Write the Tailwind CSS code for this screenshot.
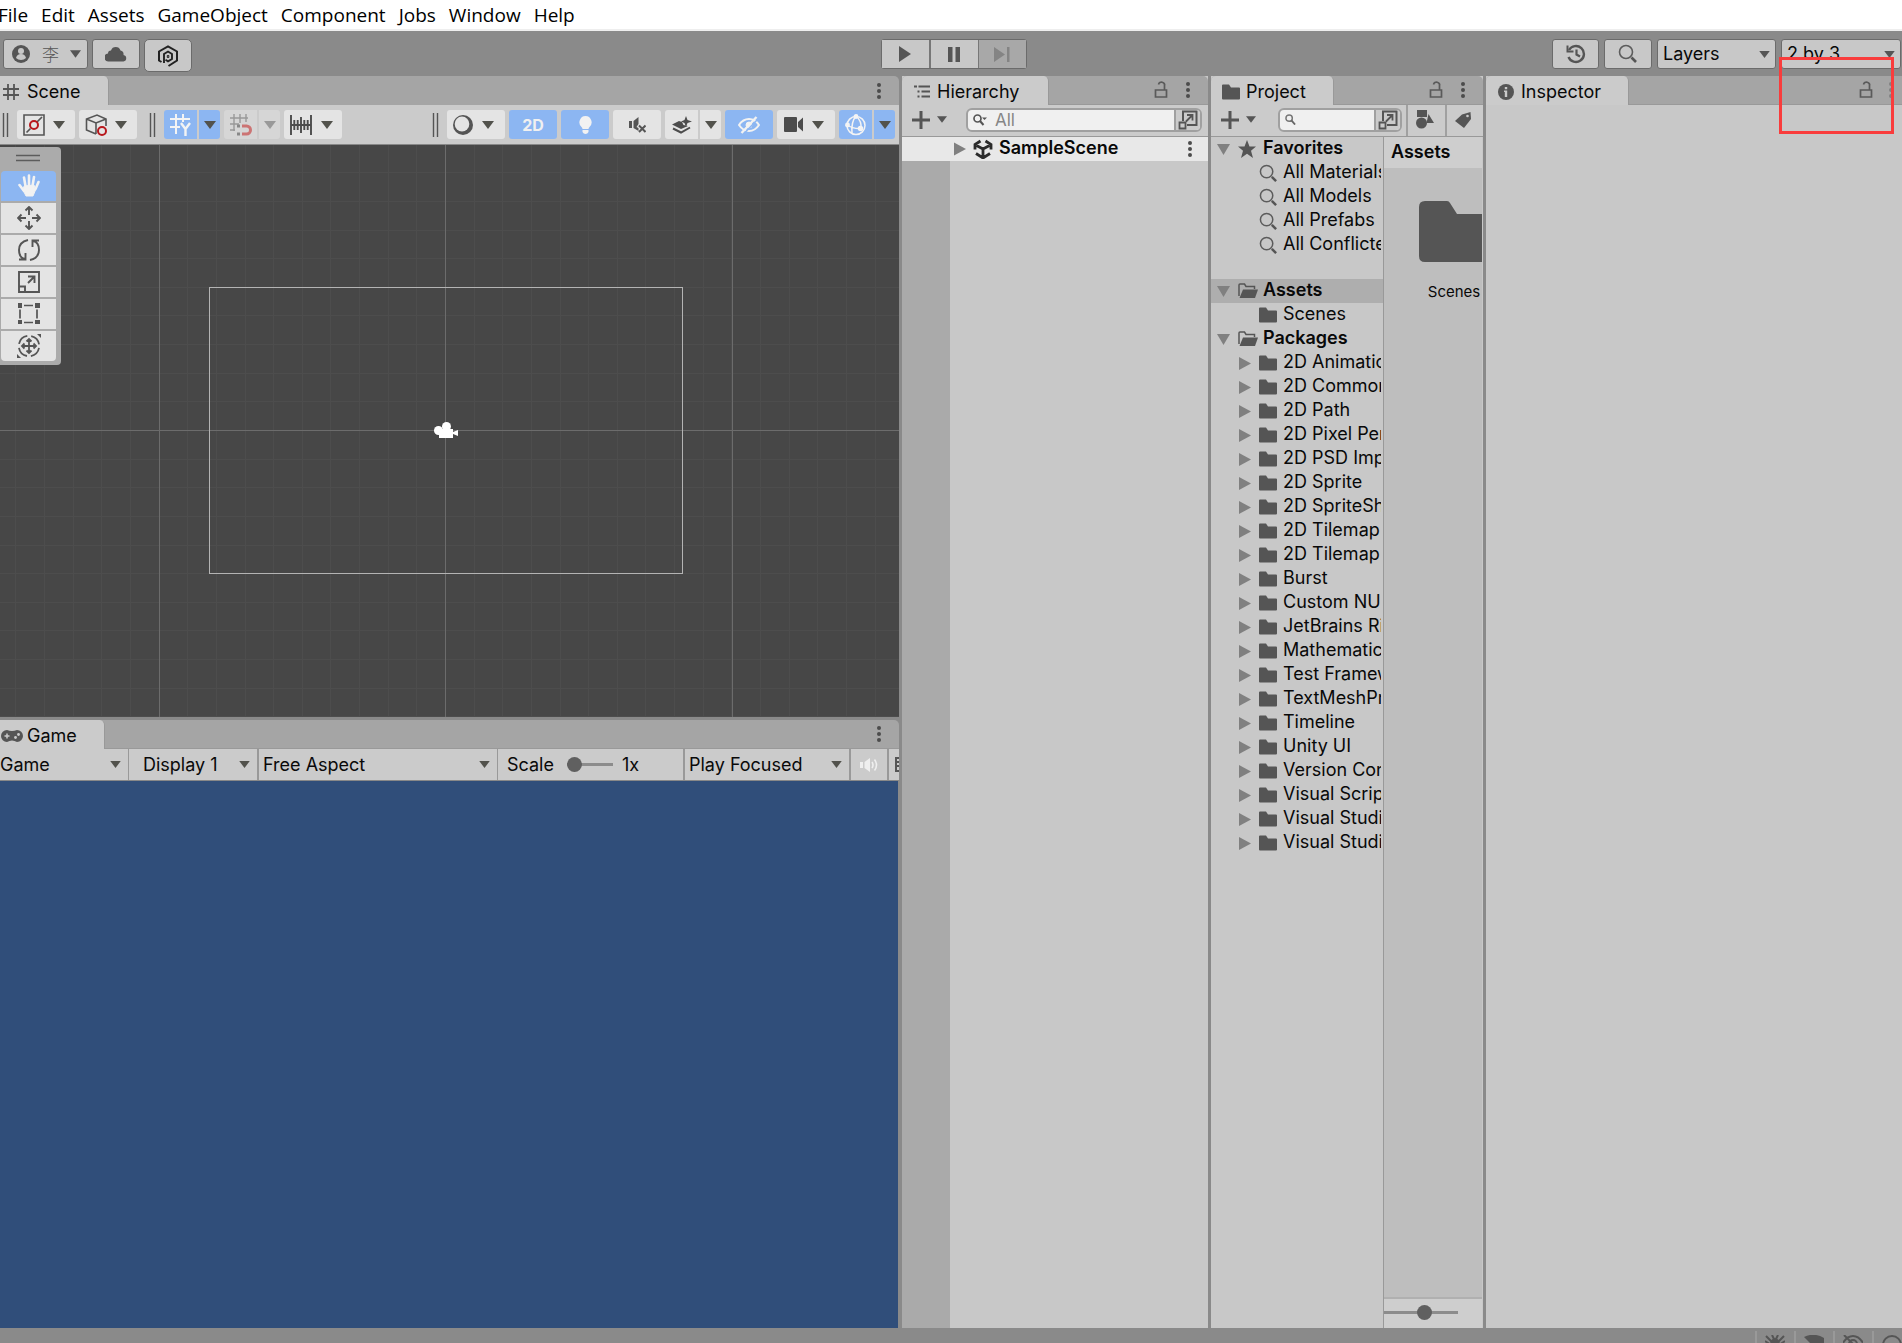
<!DOCTYPE html>
<html lang="en">
<head>
<meta charset="utf-8">
<title>Unity Editor</title>
<script src="https://cdn.jsdelivr.net/npm/@tailwindcss/browser@4"></script>
</head>
<body class="flex h-screen flex-col overflow-hidden bg-[#8a8a8a] font-['Inter','Noto_Sans_CJK_SC',sans-serif] text-[18px] leading-6 text-[#090909]">

<svg class="hidden" aria-hidden="true">
  <symbol id="arrow" viewBox="0 0 12 8"><path d="M0 0h12L6 8z" fill="currentColor"/></symbol>
  <symbol id="dots" viewBox="0 0 4 16"><g fill="#4c4c4c"><circle cx="2" cy="2" r="2"/><circle cx="2" cy="8" r="2"/><circle cx="2" cy="14" r="2"/></g></symbol>
  <symbol id="lock" viewBox="0 0 14 18"><path d="M1.500 9h11v7h-11zM10.500 9V5a3 3 0 0 0-6-1.500" fill="none" stroke="#5a5a5a" stroke-width="1.700"/></symbol>
  <symbol id="plus" viewBox="0 0 18 18"><path d="M9 0v18M0 9h18" stroke="#555" stroke-width="3" fill="none"/></symbol>
  <symbol id="search" viewBox="0 0 20 20"><circle cx="8" cy="8" r="6.500" fill="none" stroke="#5c5c5c" stroke-width="1.600"/><path d="M13.500 13.500l4.500 4.500" stroke="#555" stroke-width="2.600"/></symbol>
  <symbol id="pick" viewBox="0 0 20 20"><path d="M5 11V1.500h13.500V15H9" fill="none" stroke="#555" stroke-width="2"/><path d="M1.500 12.500h6v6h-6zM8 11.500l6-6M9 5h5.500v5.500" fill="none" stroke="#555" stroke-width="1.800"/></symbol>
  <symbol id="folder" viewBox="0 0 18 16"><path d="M0 1.500Q0 .5 1 .5h6L9 3.500h8q1 0 1 1V14.500q0 1-1 1H1q-1 0-1-1z" fill="#555"/></symbol>
  <symbol id="folder-open" viewBox="0 0 20 16"><path d="M1 13V2q0-1 1-1h4.500L8 3.500h8.500V6" fill="none" stroke="#555" stroke-width="1.500"/><path d="M5 6.500h15L17 15H1.500z" fill="#555"/></symbol>
  <symbol id="grip" viewBox="0 0 7 24"><path d="M1.500 0v24M5.500 0v24" stroke="#555" stroke-width="1.400"/></symbol>
</svg>

<!-- menu bar -->
<nav class="flex h-[31px] shrink-0 gap-[13px] border-b-2 border-[#eeeeee] bg-white font-['Open_Sans',sans-serif] text-[19px] leading-[30px] text-black">
  <a href="#" class="-ml-0.5">File</a><a href="#">Edit</a><a href="#">Assets</a><a href="#">GameObject</a><a href="#">Component</a><a href="#">Jobs</a><a href="#">Window</a><a href="#">Help</a>
</nav>

<!-- main toolbar -->
<header class="grid h-[45px] shrink-0 grid-cols-[1fr_auto_1fr] items-start pt-2">
  <div class="flex items-start gap-1 pl-[3px]">
    <button class="flex h-[30px] w-[85px] items-center rounded-[3px] border border-[#6b6b6b] bg-[#c8c8c8] pl-2 text-[#555]" aria-label="Account">
      <svg class="size-[18px]" viewBox="0 0 18 18"><circle cx="9" cy="9" r="9" fill="#555"/><circle cx="9" cy="6" r="3" fill="#c8c8c8"/><path d="M4 13q1-4 5-4t5 4q-2 2-5 2t-5-2z" fill="#c8c8c8"/></svg>
      <span class="ml-3 font-['Noto_Sans_CJK_SC',sans-serif] text-[17px] font-light">李</span>
      <svg class="ml-[11px] h-2 w-[11px]"><use href="#arrow"/></svg>
    </button>
    <button class="flex h-[30px] w-12 items-center justify-center rounded-[3px] border border-[#6b6b6b] bg-[#c8c8c8]" aria-label="Cloud">
      <svg class="h-4 w-[22px]" viewBox="0 0 22 16"><path d="M4 15.500a4 4 0 0 1-1-8 3 3 0 0 1 3-3 5 5 0 0 1 9.500 0 4 4 0 0 1 3 4.500 3.300 3.300 0 0 1 0 6.500z" fill="#555"/></svg>
    </button>
    <button class="flex h-[33px] w-12 items-center justify-center rounded-[5px] border border-[#6b6b6b] bg-[#c8c8c8]" aria-label="Package">
      <svg class="h-[22px] w-5" viewBox="0 0 20 22" fill="none" stroke="#222" stroke-width="2"><path d="M3.500 17L1 15.500v-9L10 1.300l9 5.200v9l-8.500 5.500"/><path d="M6 18V9l4-2.500L14 9v5l-4 2.300-2.500-1.500" stroke-width="1.900"/><path d="M9.300 10.500h1.500v2H9.300z" stroke-width="1"/></svg>
    </button>
  </div>
  <div class="ml-[5px] flex h-[30px] w-[146px] rounded-[3px] border border-[#6b6b6b]">
    <button class="grid flex-1 place-items-center border-r-2 border-[#777] bg-[#c8c8c8]" aria-label="Play"><svg class="h-4 w-3" viewBox="0 0 12 16"><path d="M0 0l12 8-12 8z" fill="#555"/></svg></button>
    <button class="grid flex-1 place-items-center border-r border-[#777] bg-[#c8c8c8]" aria-label="Pause"><svg class="h-[15px] w-3" viewBox="0 0 12 15"><path d="M0 0h4.500v15H0zM7.500 0H12v15H7.500z" fill="#555"/></svg></button>
    <button class="grid flex-1 place-items-center bg-[#a8a8a8]" aria-label="Step"><svg class="h-[15px] w-4" viewBox="0 0 16 15"><path d="M0 0l11 7.500L0 15zM13 0h2.500v15H13z" fill="#848484"/></svg></button>
  </div>
  <div class="flex justify-end gap-[5px] pr-px">
    <button class="grid h-[30px] w-[47px] place-items-center rounded-[3px] border border-[#6b6b6b] bg-[#c8c8c8]" aria-label="History">
      <svg class="size-5" viewBox="0 0 20 20" fill="none" stroke="#555"><path d="M3 6a8 8 0 1 1-.5 7" stroke-width="2.400"/><path d="M1.500 1.500V7.500h6" stroke-width="2"/><path d="M10.500 5.500v5l3.500 2" stroke-width="2.200"/></svg>
    </button>
    <button class="grid h-[30px] w-12 place-items-center rounded-[3px] border border-[#6b6b6b] bg-[#c8c8c8]" aria-label="Search"><svg class="size-5"><use href="#search"/></svg></button>
    <div class="grid h-[30px] w-[119px] items-center [&>*]:[grid-area:1/1]">
      <select aria-label="Layers" class="h-full w-full appearance-none rounded-[3px] border border-[#6b6b6b] bg-[#c8c8c8] pl-[5px]"><option>Layers</option></select>
      <svg class="pointer-events-none mr-[6px] h-[7px] w-[11px] justify-self-end text-[#555]"><use href="#arrow"/></svg>
    </div>
    <div class="grid h-[30px] w-[120px] items-center [&>*]:[grid-area:1/1]">
      <select aria-label="Layout" class="h-full w-full appearance-none rounded-[3px] border border-[#6b6b6b] bg-[#c8c8c8] pl-[5px]"><option>2 by 3</option></select>
      <svg class="pointer-events-none mr-[6px] h-[7px] w-[11px] justify-self-end text-[#555]"><use href="#arrow"/></svg>
    </div>
  </div>
</header>

<main class="grid min-h-0 flex-1 grid-cols-[minmax(0,899fr)_minmax(0,306fr)_minmax(0,272fr)_minmax(0,416fr)] gap-[3px]">

  <div class="grid min-h-0 grid-rows-[minmax(0,641fr)_minmax(0,608fr)] gap-[3px]">
    <!-- scene -->
    <section class="flex flex-col">
      <div class="flex h-[29px] shrink-0 items-center justify-between rounded-tr-[5px] bg-[#a5a5a5] pr-[18px]">
        <h2 class="flex h-full w-[109px] items-center gap-2 rounded-tr-[5px] border-r border-[#999] bg-[#cbcbcb] pt-0.5 pl-[3px]">
          <svg class="size-4" viewBox="0 0 16 16"><path d="M5 0v16M11 0v16M0 5h16M0 11h16" stroke="#555" stroke-width="1.800"/></svg>Scene</h2>
        <button aria-label="Scene options"><svg class="h-4 w-1"><use href="#dots"/></svg></button>
      </div>
      <div class="flex h-10 shrink-0 items-center justify-between border-b border-[#888] bg-[#cbcbcb] pr-1 pl-0.5 text-[#52524c]">
        <div class="flex items-center gap-1">
          <svg class="mr-1 h-6 w-[7px]"><use href="#grip"/></svg>
          <button class="flex h-[29px] w-[58px] items-center gap-2 rounded-[3px] bg-[#e4e4e4] pl-[6px]" aria-label="Tool pivot">
            <svg class="size-[22px]" viewBox="0 0 22 22" fill="none"><path d="M1 1h20v20H1z" stroke="#555" stroke-width="1.600"/><path d="M3.500 18.500l4-4M14 8l5-5" stroke="#555" stroke-width="1.700"/><circle cx="11" cy="11" r="4" stroke="#b8171c" stroke-width="2"/></svg>
            <svg class="h-2 w-3"><use href="#arrow"/></svg></button>
          <button class="flex h-[29px] w-[58px] items-center gap-2 rounded-[3px] bg-[#e4e4e4] pl-[6px]" aria-label="Tool orientation">
            <svg class="size-[22px]" viewBox="0 0 22 22" fill="none"><path d="M11 20l-9.500-4V5L12 1l9 4v7M1.500 5L11 9l10-4M11 9v11" stroke="#555" stroke-width="1.600"/><circle cx="17" cy="17" r="4" stroke="#b8171c" stroke-width="2"/></svg>
            <svg class="h-2 w-3"><use href="#arrow"/></svg></button>
          <svg class="mr-1 ml-2 h-6 w-[7px]"><use href="#grip"/></svg>
          <div class="flex gap-0.5">
            <button class="grid h-[29px] w-[33px] place-items-center rounded-l-[3px] bg-[#8cb6f2]" aria-label="Grid"><svg class="size-[22px]" viewBox="0 0 22 22" fill="none" stroke="#f4f4f4"><path d="M6 0v20M13 0v8M0 5h20M0 13h10" stroke-width="2"/><path d="M11 9l4.500 6L20 9M15.500 15v7" stroke-width="2.400"/></svg></button>
            <button class="grid h-[29px] w-[21px] place-items-center rounded-r-[3px] bg-[#8cb6f2]" aria-label="Grid options"><svg class="h-2 w-3"><use href="#arrow"/></svg></button>
          </div>
          <div class="flex gap-0.5 text-[#999]">
            <button class="grid h-[29px] w-[33px] place-items-center rounded-l-[3px] bg-[#d6d6d6]" aria-label="Snap"><svg class="size-[22px]" viewBox="0 0 22 22" fill="none"><path d="M4 0v17M10 0v9M16 0v8M0 4h18M0 10h9M0 16h5" stroke="#999" stroke-width="1.400"/><path d="M12 12h4.500a3.500 3.500 0 0 1 0 8H12" stroke="#cc7474" stroke-width="3"/><path d="M7 12h3M7 20h3" stroke="#888" stroke-width="3"/></svg></button>
            <button class="grid h-[29px] w-[21px] place-items-center rounded-r-[3px] bg-[#d6d6d6]" aria-label="Snap options"><svg class="h-2 w-3"><use href="#arrow"/></svg></button>
          </div>
          <button class="flex h-[29px] w-[58px] items-center gap-[9px] rounded-[3px] bg-[#e4e4e4] pl-[6px]" aria-label="Snap increment">
            <svg class="h-5 w-[22px]" viewBox="0 0 22 20"><path d="M1 0v20M21 0v20M11 2v16M4.300 5v10M7.700 5v10M14.300 5v10M17.700 5v10M1 10h20" stroke="#4c4c4c" stroke-width="1.900"/></svg>
            <svg class="h-2 w-3"><use href="#arrow"/></svg></button>
        </div>
        <div class="flex items-center gap-1">
          <svg class="mr-1 h-6 w-[7px]"><use href="#grip"/></svg>
          <button class="flex h-[29px] w-[58px] items-center gap-[9px] rounded-[3px] bg-[#e4e4e4] pl-[6px]" aria-label="Draw mode">
            <svg class="size-5" viewBox="0 0 20 20"><circle cx="10" cy="10" r="10" fill="#555"/><ellipse cx="9" cy="9" rx="7.300" ry="7.600" fill="#e4e4e4"/></svg>
            <svg class="h-2 w-3"><use href="#arrow"/></svg></button>
          <button class="h-[29px] w-12 rounded-[3px] bg-[#8cb6f2] text-base font-bold text-[#f0f0f0]">2D</button>
          <button class="grid h-[29px] w-12 place-items-center rounded-[3px] bg-[#8cb6f2]" aria-label="Lighting"><svg class="h-[18px] w-[13px]" viewBox="0 0 13 18" fill="#f2f2f2"><path d="M6.500 0a6.300 6.300 0 0 1 4 11Q9.500 12 9.500 13h-6q0-1-1-2a6.300 6.300 0 0 1 4-11zM3.500 14h6v2q-1 2-3 2t-3-2z"/></svg></button>
          <button class="grid h-[29px] w-12 place-items-center rounded-[3px] bg-[#e4e4e4]" aria-label="Audio"><svg class="h-4 w-[17px]" viewBox="0 0 17 16"><path d="M0 4h3v7H0zM4.500 4L9.500 0v7l-2 3 2 1v3l-5-3z" fill="#555"/><path d="M10 8.500l6.500 6.500M16.500 8.500L10 15" stroke="#555" stroke-width="2"/></svg></button>
          <div class="flex gap-0.5">
            <button class="grid h-[29px] w-[33px] place-items-center rounded-l-[3px] bg-[#e4e4e4]" aria-label="Effects"><svg class="h-[18px] w-5" viewBox="0 0 20 18"><path d="M0 8.500L7 5l3 1 1.500 3 4.500 1-7 3z" fill="#4c4c4c"/><path d="M1 12.500l8 4 9-5" fill="none" stroke="#4c4c4c" stroke-width="2"/><path d="M14 0l1.500 4L20 5.500 15.500 7 14 11l-1.500-4L9 5.500 12.500 4z" fill="#4c4c4c"/></svg></button>
            <button class="grid h-[29px] w-[21px] place-items-center rounded-r-[3px] bg-[#e4e4e4]" aria-label="Effects options"><svg class="h-2 w-3"><use href="#arrow"/></svg></button>
          </div>
          <button class="grid h-[29px] w-12 place-items-center rounded-[3px] bg-[#8cb6f2]" aria-label="Visibility"><svg class="h-[18px] w-[22px]" viewBox="0 0 22 18" fill="none" stroke="#f2f2f2"><path d="M1 9q4-6 10-6t10 6q-4 6-10 6T1 9z" stroke-width="2"/><circle cx="11" cy="9" r="3" fill="#f2f2f2"/><path d="M5.500 18L20 3" stroke="#8cb6f2" stroke-width="1.500"/><path d="M3.500 17L18.500 1" stroke-width="2.400"/></svg></button>
          <button class="flex h-[29px] w-[58px] items-center gap-[9px] rounded-[3px] bg-[#e4e4e4] pl-[7px]" aria-label="Camera">
            <svg class="h-[15px] w-[19px]" viewBox="0 0 19 15"><path d="M1 0h11q1 0 1 1v13q0 1-1 1H1q-1 0-1-1V1q0-1 1-1zM14 5l5-4.500v14L14 10z" fill="#4c4c4c"/></svg>
            <svg class="h-2 w-3"><use href="#arrow"/></svg></button>
          <div class="flex gap-0.5">
            <button class="grid h-[29px] w-[33px] place-items-center rounded-l-[3px] bg-[#8cb6f2]" aria-label="Gizmos"><svg class="size-[22px]" viewBox="0 0 22 22" fill="none" stroke="#f4f4f4" stroke-width="1.500"><circle cx="11" cy="11.500" r="9"/><path d="M11 2Q6 8 7 19M11 2q6 5 5 13M2 11q6 4 14 3.500"/><g fill="#f4f4f4"><circle cx="11" cy="2.500" r="1.700"/><circle cx="2.500" cy="11" r="1.700"/><circle cx="15.500" cy="14.500" r="2"/></g></svg></button>
            <button class="grid h-[29px] w-[21px] place-items-center rounded-r-[3px] bg-[#8cb6f2]" aria-label="Gizmo options"><svg class="h-2 w-3"><use href="#arrow"/></svg></button>
          </div>
        </div>
      </div>
      <div class="relative min-h-0 flex-1 overflow-hidden bg-[#474747]">
        <svg class="block h-full w-full" viewBox="0 0 899 572" preserveAspectRatio="xMidYMid slice" shape-rendering="crispEdges">
          <g id="grid-minor" stroke="#4d4d4d"></g>
          <path d="M159.500 0v572M445.500 0v572M732.500 0v572M0 285.500h899" stroke="#6c6c6c"/>
          <path d="M209.500 142.500h473v286h-473z" fill="none" stroke="#b4b4b4"/>
          <g fill="#fff" shape-rendering="auto"><circle cx="438.500" cy="285.500" r="4.500"/><circle cx="446.500" cy="281.500" r="4.500"/><path d="M439 284h14v9h-14zM453 287l5-2v6l-5-2z"/></g>
        </svg>
        <!-- floating tools overlay -->
        <div class="absolute top-0.5 left-0 flex w-[61px] flex-col gap-0.5 rounded-r-[4px] bg-[#ababab] pb-1 pl-px">
          <svg class="ml-[15px] h-[22px] w-6" viewBox="0 0 24 22"><path d="M0 8.500h24M0 13.500h24" stroke="#5c5c5c" stroke-width="1.600"/></svg>
          <button class="grid h-[30px] w-[55px] place-items-center rounded-t-[4px] bg-[#8cb6f2]" aria-label="View tool"><svg class="h-6 w-[22px]" viewBox="0 0 22 24" fill="none" stroke="#f2f2f2" stroke-width="2.600" stroke-linecap="round"><path d="M7.500 12L6 3.500M11 12V1.500M14.500 12L16 3M17.500 15l3-7M6 17l-4.500-6"/><path d="M6.500 12l9.500-1 1.500 5-2.500 6H8l-3-6z" fill="#f2f2f2" stroke-width="1"/></svg></button>
          <button class="grid h-[30px] w-[55px] place-items-center bg-[#e4e4e4]" aria-label="Move tool"><svg class="size-6" viewBox="0 0 24 24" fill="none" stroke="#555" stroke-width="1.900"><path d="M12 1v8M12 15v8M1 12h8M15 12h8M8.500 4.500L12 1l3.500 3.500M8.500 19.500L12 23l3.500-3.500M4.500 8.500L1 12l3.500 3.500M19.500 8.500L23 12l-3.500 3.500"/></svg></button>
          <button class="grid h-[30px] w-[55px] place-items-center bg-[#e4e4e4]" aria-label="Rotate tool"><svg class="size-[22px]" viewBox="0 0 22 22" fill="none" stroke="#555" stroke-width="1.900"><path d="M10 1Q1 3 1 11t6 9M12 21q9-2 9-10t-6-9M1 20.500h6.500V14M21 1.500h-6.500V8"/></svg></button>
          <button class="grid h-[30px] w-[55px] place-items-center bg-[#e4e4e4]" aria-label="Scale tool"><svg class="size-[22px]" viewBox="0 0 22 22" fill="none" stroke="#555" stroke-width="1.900"><path d="M1 1h20v20H1zM1 15.500h6V21M10 12l6-6M10 5.500h6.500V12"/></svg></button>
          <button class="grid h-[30px] w-[55px] place-items-center bg-[#e4e4e4]" aria-label="Rect tool"><svg class="size-[22px]" viewBox="0 0 22 22"><path d="M0 0h4v5H0zM17 0h5v5h-5zM0 17h4v4H0zM17 17h5v4h-5z" fill="#555"/><path d="M6 2.500h9M6 19.500h9M2 6.500v9M19 6.500v9" stroke="#555" stroke-width="1.700"/></svg></button>
          <button class="grid h-[30px] w-[55px] place-items-center rounded-b-[4px] bg-[#e4e4e4]" aria-label="Transform tool"><svg class="size-6" viewBox="0 0 24 24" fill="none" stroke="#555" stroke-width="1.800"><circle cx="12" cy="12" r="10.200" stroke-dasharray="12 4" stroke-dashoffset="-2"/><path d="M12 5v14M5 12h14M9.500 7.500L12 5l2.500 2.500M9.500 16.500L12 19l2.500-2.500M7.500 9.500L5 12l2.500 2.500M16.500 9.500L19 12l-2.500 2.500"/><path d="M20 0h4v4zM0 20v4h4z" fill="#555" stroke="none"/></svg></button>
        </div>
      </div>
    </section>

    <!-- game -->
    <section class="flex flex-col">
      <div class="flex h-[29px] shrink-0 items-center justify-between rounded-tr-[5px] border-b border-[#999] bg-[#a5a5a5] pr-[18px]">
        <h2 class="-mb-px flex h-[29px] w-[105px] items-center gap-1 rounded-tr-[5px] border-r border-[#999] bg-[#cbcbcb] pt-0.5 pl-px">
          <svg class="h-3 w-[22px]" viewBox="0 0 22 12"><path d="M6 0q5 2 10 0a6 6 0 0 1 0 12q-5-3-10 0A6 6 0 0 1 6 0z" fill="#555"/><path d="M6 3.500v5M3.500 6h5" stroke="#cbcbcb" stroke-width="1.500"/><circle cx="17.500" cy="4.500" r="1.400" fill="#cbcbcb"/><circle cx="14.500" cy="7.500" r="1.400" fill="#cbcbcb"/></svg>Game</h2>
        <button aria-label="Game options"><svg class="h-4 w-1"><use href="#dots"/></svg></button>
      </div>
      <div class="flex h-8 shrink-0 overflow-hidden border-b border-[#888] bg-[#cbcbcb] text-[#090909]">
        <div class="grid w-[129px] shrink-0 items-center border-r border-[#999] [&>*]:[grid-area:1/1]">
          <select aria-label="View" class="w-full appearance-none"><option>Game</option></select>
          <svg class="pointer-events-none mr-[7px] h-[7px] w-[11px] justify-self-end text-[#52524c]"><use href="#arrow"/></svg></div>
        <div class="grid w-[130px] shrink-0 items-center border-r-2 border-[#999] [&>*]:[grid-area:1/1]">
          <select aria-label="Display" class="w-full appearance-none pl-[14px]"><option>Display 1</option></select>
          <svg class="pointer-events-none mr-[7px] h-[7px] w-[11px] justify-self-end text-[#52524c]"><use href="#arrow"/></svg></div>
        <div class="grid flex-1 items-center border-r border-[#999] [&>*]:[grid-area:1/1]">
          <select aria-label="Aspect" class="w-full appearance-none pl-1"><option>Free Aspect</option></select>
          <svg class="pointer-events-none mr-[7px] h-[7px] w-[11px] justify-self-end text-[#52524c]"><use href="#arrow"/></svg></div>
        <div class="flex w-[187px] shrink-0 items-center border-r-2 border-[#999] pl-[9px]">
          <label for="scale" class="w-[60px]">Scale</label>
          <input id="scale" type="range" min="1" max="5" value="1" class="h-4 w-[46px] appearance-none bg-transparent [&::-webkit-slider-runnable-track]:h-[3px] [&::-webkit-slider-runnable-track]:bg-[#8c8c8c] [&::-webkit-slider-thumb]:-mt-[6px] [&::-webkit-slider-thumb]:size-[15px] [&::-webkit-slider-thumb]:appearance-none [&::-webkit-slider-thumb]:rounded-full [&::-webkit-slider-thumb]:bg-[#606060]">
          <span class="ml-[9px]">1x</span>
        </div>
        <div class="grid w-[166px] shrink-0 items-center border-r-2 border-[#999] [&>*]:[grid-area:1/1]">
          <select aria-label="Play mode" class="w-full appearance-none pl-1"><option>Play Focused</option></select>
          <svg class="pointer-events-none mr-[7px] h-[7px] w-[11px] justify-self-end text-[#52524c]"><use href="#arrow"/></svg></div>
        <button class="grid w-[38px] shrink-0 place-items-center border-r-2 border-[#999]" aria-label="Mute"><svg class="h-[14px] w-[18px]" viewBox="0 0 18 14"><path d="M0 4h3v6H0zM4.500 4L10 0v14l-5.500-4z" fill="#efefef"/><path d="M12 4q2 3 0 6M14.500 1.500q4 5.500 0 11" fill="none" stroke="#efefef" stroke-width="1.600"/></svg></button>
        <button class="flex w-[10px] shrink-0 items-center overflow-hidden pl-[6px]" aria-label="Shortcuts"><svg class="h-[15px] w-5 shrink-0" viewBox="0 0 20 15"><path d="M1 1h18v13H1zM1 5h18M1 9h18" fill="none" stroke="#555" stroke-width="2"/></svg></button>
      </div>
      <div class="mr-px flex-1 bg-[#304e7a]"></div>
    </section>
  </div>

  <!-- hierarchy -->
  <section class="flex min-h-0 flex-col bg-[#c8c8c8]">
    <div class="flex h-[29px] shrink-0 items-center rounded-t-[5px] border-b border-[#999] bg-[#a5a5a5] pr-[18px]">
      <h2 class="-mb-px flex h-[29px] w-[147px] items-center gap-[7px] rounded-t-[5px] border-r border-[#999] bg-[#cbcbcb] pt-0.5 pl-3">
        <svg class="h-[13px] w-4" viewBox="0 0 16 13"><path d="M4.500 1.500H16M7.500 6.500H16M7.500 11.500H16" stroke="#555" stroke-width="1.800"/><path d="M0 .5h3v2H0zM3.500 5.500h2v2h-2zM3.500 10.500h2v2h-2z" fill="#555"/></svg>Hierarchy</h2>
      <button class="ml-auto" aria-label="Lock hierarchy"><svg class="h-[18px] w-[14px]"><use href="#lock"/></svg></button>
      <button class="ml-[18px]" aria-label="Hierarchy options"><svg class="h-4 w-1"><use href="#dots"/></svg></button>
    </div>
    <div class="flex h-8 shrink-0 items-center border-b border-[#999] bg-[#cbcbcb] pr-[6px] pb-0.5 pl-[10px]">
      <button class="flex items-center gap-[7px] text-[#555]" aria-label="Create"><svg class="h-[18px] w-[18px]"><use href="#plus"/></svg><svg class="h-[7px] w-[10px]"><use href="#arrow"/></svg></button>
      <div class="ml-[19px] flex h-6 flex-1 items-center overflow-hidden rounded-[6px] border-2 border-[#a0a0a0] bg-[#f0f0f0]">
        <svg class="ml-[5px] h-3 w-[14px] shrink-0" viewBox="0 0 14 12"><circle cx="4.500" cy="4.500" r="3.500" fill="none" stroke="#555" stroke-width="1.700"/><path d="M7 7l3.500 4" stroke="#555" stroke-width="2"/><path d="M9 3.500h5L11.500 6z" fill="#555"/></svg>
        <input type="search" placeholder="All" aria-label="Search hierarchy" class="ml-2 h-full w-0 flex-1 bg-transparent text-[17px] outline-none placeholder:text-[#868686]">
        <button class="grid h-full w-[26px] place-items-center border-l-2 border-[#a0a0a0] bg-[#cbcbcb]" aria-label="Search window"><svg class="size-5"><use href="#pick"/></svg></button>
      </div>
    </div>
    <div class="flex h-6 shrink-0 items-center bg-[#e8e8e8] pr-4 pl-[52px]">
      <svg class="h-4 w-[12px]" viewBox="0 0 12 16"><path d="M0 1.500l12 6.500-12 6.500z" fill="#808080"/></svg>
      <svg class="ml-[7px] size-5" viewBox="0 0 20 20" fill="none" stroke="#2b2b2b" stroke-width="2.800"><path d="M10 10v7.500M10 10L3.500 6.500M10 10l6.500-3.500M7.500 2L2 5.500v5M12.500 2L18 5.500v5M3 14.500l7 4.500 7-4.500"/></svg>
      <span class="ml-[6px] pb-0.5 font-semibold">SampleScene</span>
      <button class="ml-auto" aria-label="Scene menu"><svg class="h-4 w-1"><use href="#dots"/></svg></button>
    </div>
    <div class="w-12 flex-1 bg-[#aaaaaa]"></div>
  </section>

  <!-- project -->
  <section class="flex min-h-0 flex-col bg-[#c8c8c8]">
    <div class="flex h-[29px] shrink-0 items-center rounded-t-[5px] border-b border-[#999] bg-[#a5a5a5] pr-[18px]">
      <h2 class="-mb-px flex h-[29px] w-[123px] items-center gap-[6px] rounded-t-[5px] border-r border-[#999] bg-[#cbcbcb] pt-0.5 pl-[11px]">
        <svg class="h-4 w-[18px]"><use href="#folder"/></svg>Project</h2>
      <button class="ml-auto" aria-label="Lock project"><svg class="h-[18px] w-[14px]"><use href="#lock"/></svg></button>
      <button class="ml-[18px]" aria-label="Project options"><svg class="h-4 w-1"><use href="#dots"/></svg></button>
    </div>
    <div class="flex h-8 shrink-0 items-center border-b border-[#999] bg-[#cbcbcb] pl-[10px]">
      <button class="flex items-center gap-[7px] pb-0.5 text-[#555]" aria-label="Create asset"><svg class="h-[18px] w-[18px]"><use href="#plus"/></svg><svg class="h-[7px] w-[10px]"><use href="#arrow"/></svg></button>
      <div class="mb-0.5 ml-[22px] flex h-6 flex-1 items-center overflow-hidden rounded-[6px] border-2 border-[#a0a0a0] bg-[#f0f0f0]">
        <svg class="ml-[5px] size-[11px] shrink-0" viewBox="0 0 12 12"><circle cx="4.500" cy="4.500" r="3.500" fill="none" stroke="#777" stroke-width="1.600"/><path d="M7 7l4 4.500" stroke="#666" stroke-width="2"/></svg>
        <input type="search" aria-label="Search assets" class="ml-1 h-full w-0 flex-1 bg-transparent text-[17px] outline-none">
        <button class="grid h-full w-[26px] place-items-center border-l-2 border-[#a0a0a0] bg-[#cbcbcb]" aria-label="Search window"><svg class="size-5"><use href="#pick"/></svg></button>
      </div>
      <button class="ml-1 grid h-full w-[39px] place-items-center border-l-2 border-[#a0a0a0] pr-1 pb-0.5" aria-label="Search by type"><svg class="h-[19px] w-[18px]" viewBox="0 0 18 19" fill="#555"><path d="M1 0h10v7H1zM12.500 4L18 13H10.500z"/><circle cx="5.500" cy="13" r="5.500"/></svg></button>
      <button class="grid h-full w-[38px] place-items-center border-l-2 border-[#a0a0a0] pr-1 pb-0.5" aria-label="Search by label"><svg class="size-4" viewBox="0 0 16 16"><path d="M7 2.500L15.500 0 16 7 9 16 0 9z" fill="#555"/><circle cx="12.500" cy="4" r="1.300" fill="#cbcbcb"/></svg></button>
    </div>
    <div class="flex min-h-0 flex-1">
      <div class="min-w-0 flex-1 overflow-hidden border-r border-[#999] whitespace-nowrap">
        <ul id="tree"></ul>
      </div>
      <div class="mr-px flex w-[98px] shrink-0 flex-col overflow-hidden bg-[#bebebe]">
        <h3 class="h-[31px] bg-[#cecece] pl-[7px] leading-[30px] font-semibold">Assets</h3>
        <figure class="ml-[35px] w-[70px] flex-1 pt-[33px]">
          <svg class="h-[61px] w-[70px]" viewBox="0 0 70 61"><path d="M0 6q0-6 6-6h22q2 0 3 2l7 11h26q6 0 6 6v36q0 6-6 6H6q-6 0-6-6z" fill="#555"/></svg>
          <figcaption class="mt-[18px] text-center text-[15px]">Scenes</figcaption>
        </figure>
        <div class="flex h-[31px] items-center border-t-2 border-[#b0b0b0] bg-[#cecece] pb-0.5">
          <input aria-label="Icon size" type="range" min="0" max="100" value="56" class="h-4 w-[74px] appearance-none bg-transparent [&::-webkit-slider-runnable-track]:h-[3px] [&::-webkit-slider-runnable-track]:bg-[#8c8c8c] [&::-webkit-slider-thumb]:-mt-[6px] [&::-webkit-slider-thumb]:size-[15px] [&::-webkit-slider-thumb]:appearance-none [&::-webkit-slider-thumb]:rounded-full [&::-webkit-slider-thumb]:bg-[#606060]">
        </div>
      </div>
    </div>
  </section>

  <!-- inspector -->
  <section class="flex min-h-0 flex-col bg-[#c8c8c8]">
    <div class="flex h-[29px] shrink-0 items-center rounded-tl-[5px] border-b border-[#999] bg-[#a5a5a5] pr-[9px]">
      <h2 class="-mb-px flex h-[29px] w-[143px] items-center gap-[7px] rounded-t-[5px] border-r border-[#999] bg-[#cbcbcb] pt-0.5 pl-3">
        <svg class="size-4" viewBox="0 0 16 16"><circle cx="8" cy="8" r="8" fill="#555"/><path d="M6.800 3h2.400v2.200H6.800zM6 6.500h3.200V13H6.800V8H6z" fill="#cbcbcb"/></svg>Inspector</h2>
      <button class="ml-auto" aria-label="Lock inspector"><svg class="h-[18px] w-[14px]"><use href="#lock"/></svg></button>
      <button class="ml-4 opacity-40" aria-label="Inspector options"><svg class="h-4 w-1"><use href="#dots"/></svg></button>
    </div>
  </section>
</main>

<!-- status bar, cut off by the window's lower edge -->
<footer class="flex h-[15px] shrink-0 items-start justify-end overflow-hidden pt-[3px]">
  <button class="h-6 w-[39px] border-l-2 border-[#999] pt-1 pl-2" aria-label="Debug"><svg class="size-5" viewBox="0 0 20 20"><path d="M1 1l6 6M0 6l6 4M7 0l2 4M13 0l-2 4M19 1l-6 6M20 6l-6 4" stroke="#555" stroke-width="2"/><ellipse cx="10" cy="10" rx="5" ry="7" fill="#555"/></svg></button>
  <button class="h-6 w-[39px] border-l-2 border-[#999] pt-1 pl-2" aria-label="Cache"><svg class="size-5" viewBox="0 0 20 20"><path d="M0 2q10-5 20 1v5l-9 5z" fill="#555"/></svg></button>
  <button class="h-6 w-[39px] border-l-2 border-[#999] pt-1 pl-2" aria-label="Auto refresh"><svg class="size-5" viewBox="0 0 20 20" fill="none" stroke="#555" stroke-width="2"><path d="M0 8Q4 1 10 1t10 7M1 0l17 17"/><circle cx="10" cy="9" r="4"/></svg></button>
  <button class="h-6 w-[30px] overflow-hidden border-l-2 border-[#999] pt-1 pl-2" aria-label="Progress"><svg class="size-5" viewBox="0 0 20 20" fill="none" stroke="#555" stroke-width="2"><circle cx="10" cy="10" r="9"/></svg></button>
</footer>

<!-- highlight marker -->
<div class="pointer-events-none absolute top-[57px] right-2 h-[77px] w-[115px] border-3 border-[#f93c3c]"></div>

<script>
  const down = '<svg class="mr-2 h-[11px] w-[13px] shrink-0" viewBox="0 0 13 11"><path d="M0 0h13L6.500 11z" fill="#808080"/></svg>';
  const right = '<svg class="mr-2 h-[13px] w-3 shrink-0" viewBox="0 0 12 13"><path d="M0 0l12 6.500L0 13z" fill="#808080"/></svg>';
  const icon = (id, cls) => `<svg class="${cls}"><use href="#${id}"/></svg>`;
  const label = name => `<span class="mr-0.5 min-w-0 flex-1 overflow-hidden pb-0.5">${name}</span>`;
  const star = '<svg class="mr-[7px] h-[18px] w-[18px] shrink-0" viewBox="0 0 18 18"><path d="M9 0l2.500 6.500H18l-5 4.300 2 7.200-6-4.200L3 18l2-7.200L0 6.500h6.500z" fill="#555"/></svg>';
  const head = (mark, name, cls) => `<li class="${cls}">${down}${mark}${label(name)}</li>`;
  const base = 'flex h-6 items-center pl-[6px] font-semibold';
  const open = icon('folder-open', 'mr-[5px] h-4 w-5 shrink-0');
  const folder = icon('folder', 'mr-[6px] h-4 w-[18px] shrink-0');
  let html = head(star, 'Favorites', base);
  for (const n of ['All Materials', 'All Models', 'All Prefabs', 'All Conflicted'])
    html += `<li class="flex h-6 items-center pl-12">${icon('search', 'mr-[5px] size-[19px] shrink-0')}${label(n)}</li>`;
  html += head(open, 'Assets', 'mt-[22px] flex h-6 items-center pl-[6px] font-semibold bg-[#aeaeae]');
  html += `<li class="flex h-6 items-center pl-12">${folder}${label('Scenes')}</li>`;
  html += head(open, 'Packages', base);
  for (const n of ['2D Animation', '2D Common', '2D Path', '2D Pixel Perfect', '2D PSD Importer', '2D Sprite', '2D SpriteShape', '2D Tilemap Editor', '2D Tilemap Extras', 'Burst', 'Custom NUnit', 'JetBrains Rider', 'Mathematics', 'Test Framework', 'TextMeshPro', 'Timeline', 'Unity UI', 'Version Control', 'Visual Scripting', 'Visual Studio Code', 'Visual Studio Editor'])
    html += `<li class="flex h-6 items-center pl-7">${right}${folder}${label(n)}</li>`;
  document.getElementById('tree').innerHTML = html;

  let d = '';
  for (let i = -20; i <= 20; i++) {
    d += `M${Math.round(445 + i * 28.64) + .5} 0v572M0 ${Math.round(285 + i * 28.64) + .5}h899`;
  }
  document.getElementById('grid-minor').innerHTML = `<path d="${d}"/>`;
</script>
</body>
</html>
